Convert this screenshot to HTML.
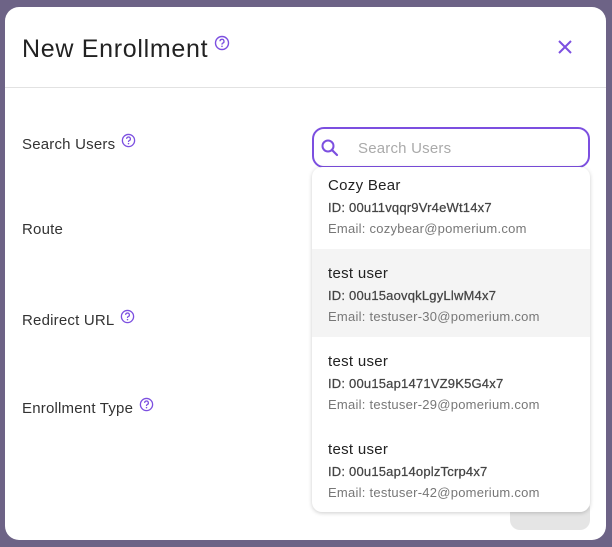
<!DOCTYPE html>
<html><head><meta charset="utf-8"><style>
*{box-sizing:border-box;margin:0;padding:0}
body{width:612px;height:547px;background:#6d6386;position:relative;overflow:hidden;font-family:"Liberation Sans",sans-serif;color:#222}
.modal{position:absolute;left:5px;top:7px;width:601px;height:533px;background:#fff;border-radius:14px;overflow:hidden}
.title{position:absolute;left:17px;top:28px;font-size:25px;color:#222;letter-spacing:0.7px}
.hr{position:absolute;left:0;top:80px;width:100%;height:1px;background:#e2e2e2}
.lbl{position:absolute;left:17px;font-size:15px;color:#333;letter-spacing:0.2px}
.q{display:inline-block;vertical-align:top;margin-left:6px;margin-top:-3px}
.search{position:absolute;left:307px;top:120px;width:278px;height:41px;border:2px solid #7c4fe0;border-radius:12px}
.search span{position:absolute;left:44px;top:11px;font-size:15px;color:#aaa;letter-spacing:0.2px}
.dd{position:absolute;left:312px;top:167px;width:278px;height:345px;background:#fff;border-radius:10px;box-shadow:0 1px 4px rgba(0,0,0,.2);overflow:hidden}
.it{position:absolute;left:0;width:100%;height:88px}
.it .n{position:absolute;left:16px;font-size:15px;color:#222;letter-spacing:0.3px}
.it .i{position:absolute;left:16px;font-size:13px;color:#444;letter-spacing:0.2px;-webkit-text-stroke:0.25px #444}
.it .e{position:absolute;left:16px;font-size:13px;color:#777;letter-spacing:0.25px}
.btn{position:absolute;left:505px;top:492px;width:80px;height:31px;background:#e5e5e5;border-radius:10px}
</style></head><body>
<div class="modal">
<div class="title">New Enrollment<svg class="q" width="16" height="16" viewBox="0 0 16 16" style="margin-top:0"><circle cx="8" cy="8" r="6.5" fill="none" stroke="#7c4fe0" stroke-width="1.4"/><path d="M6 6.3a2 2 0 1 1 2.6 1.9c-.5.2-.6.5-.6 1v.4" fill="none" stroke="#7c4fe0" stroke-width="1.3"/><circle cx="8" cy="11.3" r=".8" fill="#7c4fe0"/></svg></div>
<svg style="position:absolute;left:553px;top:33px" width="14" height="14" viewBox="0 0 14 14"><path d="M1 1L13 13M13 1L1 13" stroke="#7c4fe0" stroke-width="2"/></svg>
<div class="hr"></div>
<div class="lbl" style="top:129px">Search Users<svg class="q" width="15" height="15" viewBox="0 0 16 16"><circle cx="8" cy="8" r="6.5" fill="none" stroke="#7c4fe0" stroke-width="1.4"/><path d="M6 6.3a2 2 0 1 1 2.6 1.9c-.5.2-.6.5-.6 1v.4" fill="none" stroke="#7c4fe0" stroke-width="1.3"/><circle cx="8" cy="11.3" r=".8" fill="#7c4fe0"/></svg></div>
<div class="lbl" style="top:214px">Route</div>
<div class="lbl" style="top:305px">Redirect URL<svg class="q" width="15" height="15" viewBox="0 0 16 16"><circle cx="8" cy="8" r="6.5" fill="none" stroke="#7c4fe0" stroke-width="1.4"/><path d="M6 6.3a2 2 0 1 1 2.6 1.9c-.5.2-.6.5-.6 1v.4" fill="none" stroke="#7c4fe0" stroke-width="1.3"/><circle cx="8" cy="11.3" r=".8" fill="#7c4fe0"/></svg></div>
<div class="lbl" style="top:393px">Enrollment Type<svg class="q" width="15" height="15" viewBox="0 0 16 16"><circle cx="8" cy="8" r="6.5" fill="none" stroke="#7c4fe0" stroke-width="1.4"/><path d="M6 6.3a2 2 0 1 1 2.6 1.9c-.5.2-.6.5-.6 1v.4" fill="none" stroke="#7c4fe0" stroke-width="1.3"/><circle cx="8" cy="11.3" r=".8" fill="#7c4fe0"/></svg></div>
<div class="search"><svg style="position:absolute;left:7px;top:10px" width="18" height="18" viewBox="0 0 18 18"><circle cx="7" cy="7" r="5.5" fill="none" stroke="#7c4fe0" stroke-width="2"/><path d="M11 11L16 16" stroke="#7c4fe0" stroke-width="2.2" stroke-linecap="round"/></svg><span>Search Users</span></div>
<div class="btn"></div>
</div>
<div class="dd">
<div class="it" style="top:-6px"><div class="n" style="top:16px">Cozy Bear</div><div class="i" style="top:39px">ID: 00u11vqqr9Vr4eWt14x7</div><div class="e" style="top:60px">Email: cozybear@pomerium.com</div></div>
<div class="it" style="top:82px;background:#f4f4f4"><div class="n" style="top:16px">test user</div><div class="i" style="top:39px">ID: 00u15aovqkLgyLlwM4x7</div><div class="e" style="top:60px">Email: testuser-30@pomerium.com</div></div>
<div class="it" style="top:170px"><div class="n" style="top:16px">test user</div><div class="i" style="top:39px">ID: 00u15ap1471VZ9K5G4x7</div><div class="e" style="top:60px">Email: testuser-29@pomerium.com</div></div>
<div class="it" style="top:258px"><div class="n" style="top:16px">test user</div><div class="i" style="top:39px">ID: 00u15ap14oplzTcrp4x7</div><div class="e" style="top:60px">Email: testuser-42@pomerium.com</div></div>
</div>
</body></html>
